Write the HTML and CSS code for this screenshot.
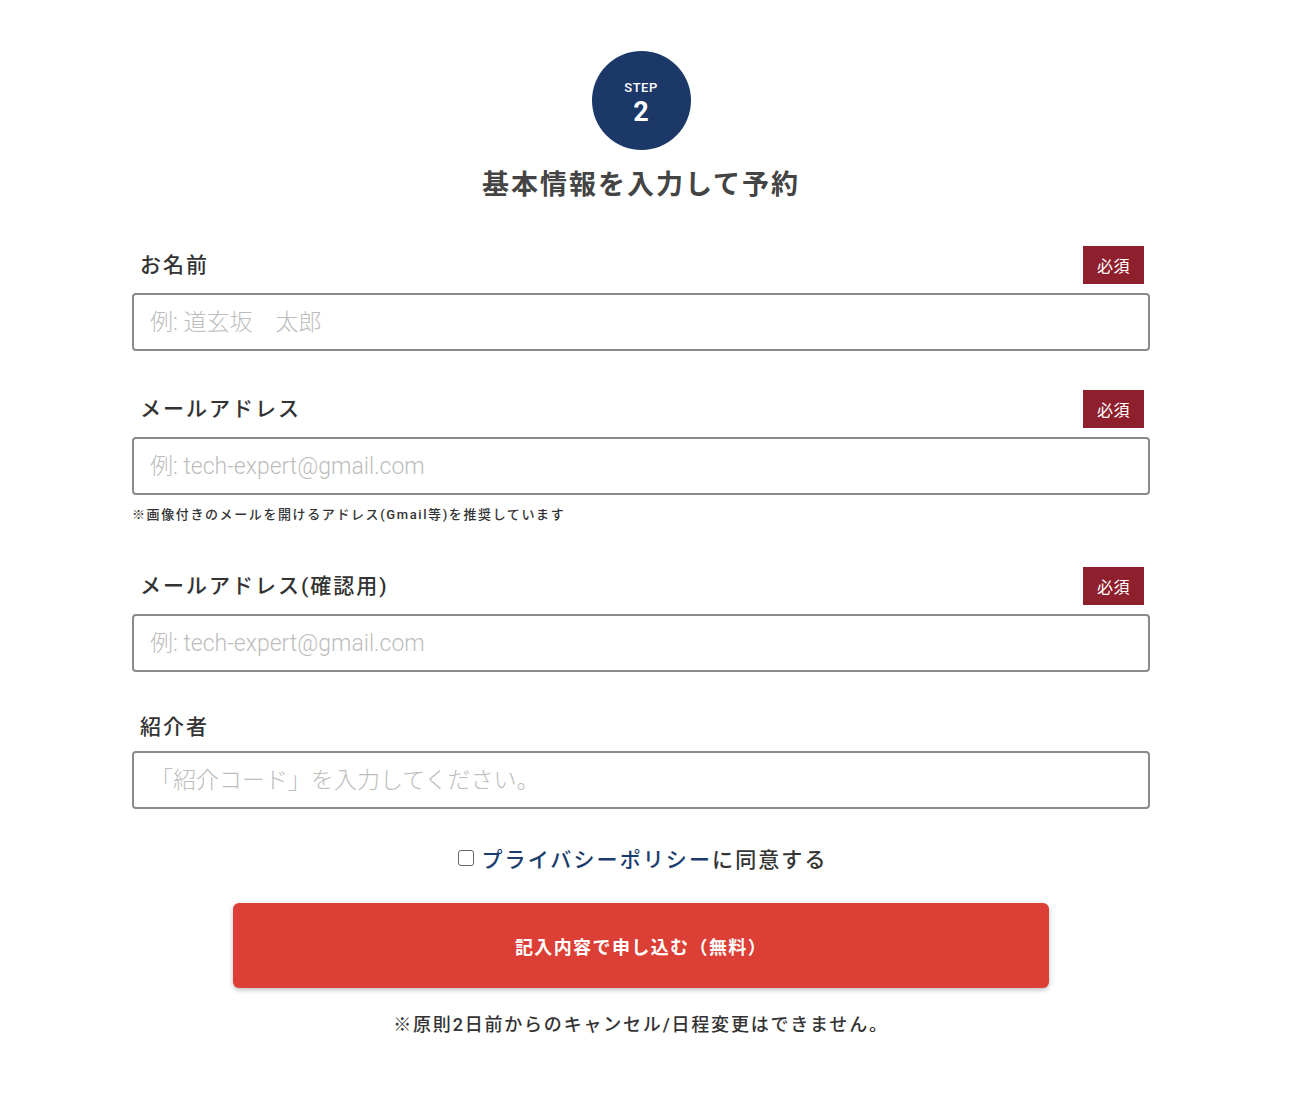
FILE: index.html
```html
<!DOCTYPE html>
<html lang="ja">
<head>
<meta charset="utf-8">
<title>STEP 2</title>
<link rel="stylesheet" href="styles.css">
</head>
<body>
<div class="page">
  <div class="step">
    <span class="step-label">STEP</span>
    <span class="step-num">2</span>
  </div>
  <h1 class="title">基本情報を入力して予約</h1>

  <form class="form">
    <div class="field">
      <div class="label-row">
        <label class="label">お名前</label>
        <span class="badge">必須</span>
      </div>
      <input class="input" type="text" placeholder="例: 道玄坂　太郎">
    </div>

    <div class="field with-note">
      <div class="label-row">
        <label class="label">メールアドレス</label>
        <span class="badge">必須</span>
      </div>
      <input class="input" type="text" placeholder="例: tech-expert@gmail.com">
      <p class="note">※画像付きのメールを開けるアドレス(Gmail等)を推奨しています</p>
    </div>

    <div class="field">
      <div class="label-row">
        <label class="label">メールアドレス(確認用)</label>
        <span class="badge">必須</span>
      </div>
      <input class="input" type="text" placeholder="例: tech-expert@gmail.com">
    </div>

    <div class="field last">
      <div class="label-row short">
        <label class="label">紹介者</label>
      </div>
      <input class="input" type="text" placeholder="「紹介コード」を入力してください。">
    </div>

    <div class="agree">
      <span class="checkbox"></span>
      <span class="agree-text"><a class="link">プライバシーポリシー</a>に同意する</span>
    </div>

    <button class="submit" type="button">記入内容で申し込む（無料）</button>
    <p class="footnote">※原則2日前からのキャンセル/日程変更はできません。</p>
  </form>
</div>
</body>
</html>
```

FILE: styles.css
```css
html, body {
  margin: 0;
  padding: 0;
  background: #ffffff;
}
body {
  font-family: Roboto, "Noto Sans CJK JP", sans-serif;
  color: #333333;
}
.page {
  width: 1018px;
  margin-left: 132px;
  padding-top: 51px;
  display: flex;
  flex-direction: column;
  align-items: center;
}
.step {
  width: 99px;
  height: 99px;
  border-radius: 50%;
  background: #1b3868;
  color: #ffffff;
  display: flex;
  flex-direction: column;
  align-items: center;
  justify-content: center;
  padding-top: 7px;
  box-sizing: border-box;
}
.step-label {
  font-size: 13px;
  font-weight: 500;
  line-height: 16px;
  letter-spacing: 0.5px;
}
.step-num {
  font-size: 27px;
  font-weight: 700;
  line-height: 32px;
}
.title {
  margin: 17px 0 0;
  font-size: 27px;
  font-weight: 700;
  line-height: 36px;
  letter-spacing: 2px;
  color: #444444;
}
.form {
  width: 100%;
  margin-top: 43px;
  display: flex;
  flex-direction: column;
  align-items: center;
}
.field {
  width: 100%;
  margin-bottom: 39px;
}
.field.with-note {
  margin-bottom: 42px;
}
.field.last {
  margin-bottom: 34px;
}
.label-row {
  height: 38px;
  display: flex;
  align-items: center;
  justify-content: space-between;
  margin-bottom: 9px;
  padding-left: 8px;
  padding-right: 6px;
}
.label-row .label {
  margin-top: -4px;
}
.label-row.short {
  height: 28px;
  margin-bottom: 10px;
  margin-top: 2px;
}
.label {
  font-size: 21px;
  font-weight: 500;
  letter-spacing: 2px;
  color: #333333;
}
.badge {
  width: 61px;
  height: 38px;
  background: #8e1f2c;
  color: #ffffff;
  font-size: 16px;
  display: flex;
  align-items: center;
  justify-content: center;
  letter-spacing: 0.5px;
}
.input {
  display: block;
  width: 100%;
  height: 58px;
  box-sizing: border-box;
  border: 2px solid #8a8a8a;
  border-radius: 4px;
  padding: 0 16px;
  font-family: Roboto, "Noto Sans CJK JP", sans-serif;
  font-size: 23px;
  font-weight: 300;
  color: #333333;
  background: #ffffff;
  outline: none;
}
.input::placeholder {
  color: #bdbdbd;
}
.note {
  margin: 10px 0 0;
  font-size: 13px;
  font-weight: 500;
  line-height: 20px;
  letter-spacing: 1.6px;
  color: #333333;
}
.agree {
  display: flex;
  align-items: center;
  gap: 7px;
  height: 30px;
}
.checkbox {
  width: 14px;
  height: 14px;
  border: 1.5px solid #666666;
  border-radius: 3px;
  background: #ffffff;
  margin-left: 4px;
}
.agree-text {
  font-size: 21px;
  font-weight: 500;
  letter-spacing: 2.1px;
  color: #333333;
}
.link {
  color: #1b3d6e;
}
.submit {
  margin-top: 30px;
  width: 816px;
  height: 85px;
  border: none;
  border-radius: 6px;
  background: #dc3f35;
  color: #ffffff;
  font-family: Roboto, "Noto Sans CJK JP", sans-serif;
  font-size: 18px;
  font-weight: 700;
  letter-spacing: 1.4px;
  box-shadow: 0 2px 5px rgba(0, 0, 0, 0.25);
  cursor: pointer;
}
.footnote {
  margin: 25px 0 0;
  font-size: 18px;
  font-weight: 500;
  line-height: 24px;
  letter-spacing: 1.8px;
  color: #333333;
}
```
